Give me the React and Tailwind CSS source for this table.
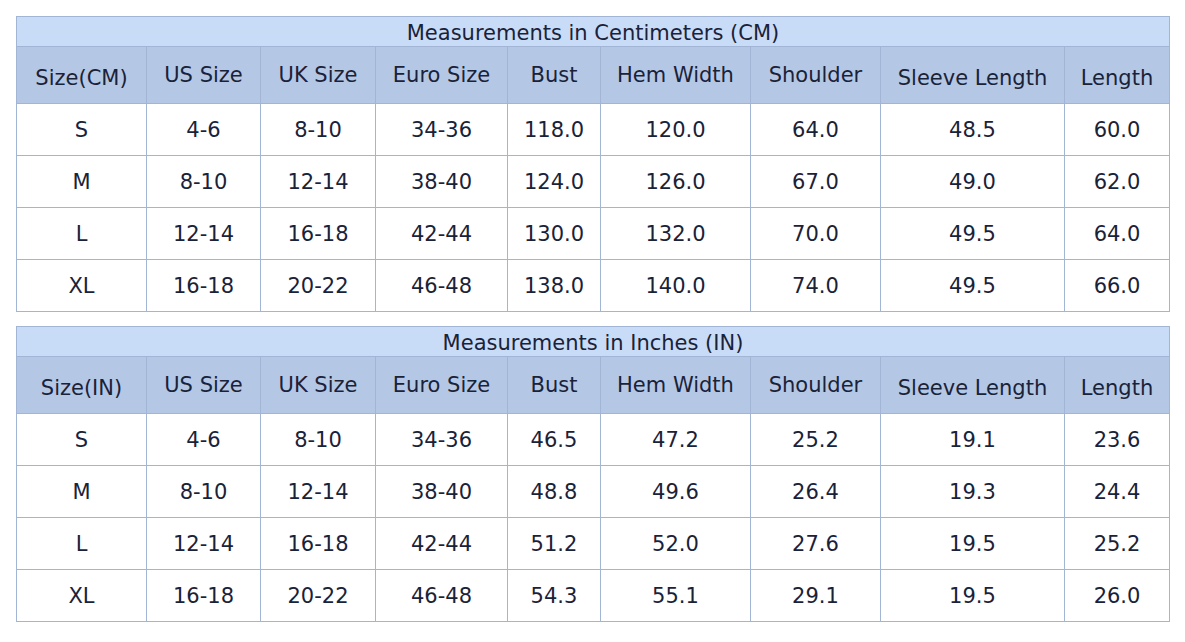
const cols = [130, 114, 115, 132, 93, 150, 130, 184, 105];

const headers = [
  { label: 'US Size' },
  { label: 'UK Size' },
  { label: 'Euro Size' },
  { label: 'Bust' },
  { label: 'Hem Width' },
  { label: 'Shoulder' },
  { label: 'Sleeve Length', low: true },
  { label: 'Length', low: true },
];

const tables = [
  {
    title: 'Measurements in Centimeters (CM)',
    first: 'Size(CM)',
    rows: [
      ['S', '4-6', '8-10', '34-36', '118.0', '120.0', '64.0', '48.5', '60.0'],
      ['M', '8-10', '12-14', '38-40', '124.0', '126.0', '67.0', '49.0', '62.0'],
      ['L', '12-14', '16-18', '42-44', '130.0', '132.0', '70.0', '49.5', '64.0'],
      ['XL', '16-18', '20-22', '46-48', '138.0', '140.0', '74.0', '49.5', '66.0'],
    ],
  },
  {
    title: 'Measurements in Inches (IN)',
    first: 'Size(IN)',
    rows: [
      ['S', '4-6', '8-10', '34-36', '46.5', '47.2', '25.2', '19.1', '23.6'],
      ['M', '8-10', '12-14', '38-40', '48.8', '49.6', '26.4', '19.3', '24.4'],
      ['L', '12-14', '16-18', '42-44', '51.2', '52.0', '27.6', '19.5', '25.2'],
      ['XL', '16-18', '20-22', '46-48', '54.3', '55.1', '29.1', '19.5', '26.0'],
    ],
  },
];

function SizeTable({ table }) {
  return (
    <table className="w-[1154px] table-fixed border-collapse text-[21px] text-[#1a2238]">
      <colgroup>
        {cols.map((w, i) => (
          <col key={i} style={{ width: w }} />
        ))}
      </colgroup>
      <thead>
        <tr className="h-[30px]">
          <th colSpan={9} className="border border-[#a3b5d5] bg-[#c9dcf7] p-0 pt-[3px] text-center font-normal leading-[25px]">
            {table.title}
          </th>
        </tr>
        <tr className="h-[57px]">
          <th className="border border-[#a3b5d5] bg-[#b4c8e6] p-0 pt-[7px] text-center font-normal">
            {table.first}
          </th>
          {headers.map((h) => (
            <th
              key={h.label}
              className={
                h.low
                  ? 'border border-[#a3b5d5] bg-[#b4c8e6] p-0 pt-[7px] text-center font-normal'
                  : 'border border-[#a3b5d5] bg-[#b4c8e6] p-0 pt-[1px] text-center font-normal'
              }
            >
              {h.label}
            </th>
          ))}
        </tr>
      </thead>
      <tbody>
        {table.rows.map((row, r) => (
          <tr key={r} className="h-[52px]">
            {row.map((cell, c) => (
              <td key={c} className="border border-[#a3b5d5] bg-white p-0 pt-[2px] text-center">
                {cell}
              </td>
            ))}
          </tr>
        ))}
      </tbody>
    </table>
  );
}

export default function App() {
  return (
    <div
      className="flex min-h-[642px] flex-col gap-[14px] bg-white px-4 pt-4"
      style={{ fontFamily: '"DejaVu Sans", Verdana, sans-serif' }}
    >
      {tables.map((t) => (
        <SizeTable key={t.title} table={t} />
      ))}
    </div>
  );
}
